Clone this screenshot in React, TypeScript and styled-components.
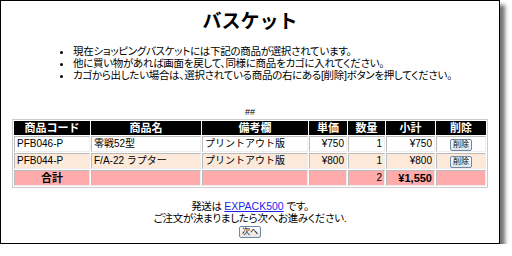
import * as React from 'react';
import styled, { createGlobalStyle } from 'styled-components';

interface Item {
  code: string;
  name: string;
  note: string;
  price: string;
  qty: number;
  subtotal: string;
}

const items: Item[] = [
  { code: 'PFB046-P', name: '零戦52型', note: 'プリントアウト版', price: '¥750', qty: 1, subtotal: '¥750' },
  { code: 'PFB044-P', name: 'F/A-22 ラプター', note: 'プリントアウト版', price: '¥800', qty: 1, subtotal: '¥800' },
];

const GlobalStyle = createGlobalStyle`
  html, body {
    margin: 0;
    padding: 0;
    background: #fff;
  }
  body {
    font-family: "Liberation Sans", "Noto Sans CJK JP", sans-serif;
    color: #000;
  }
`;

const App = () => {
  return (
    <>
      <GlobalStyle />
      <Window>
        <Title>バスケット</Title>
        <Notes>
          <li>現在ショッピングバスケットには下記の商品が選択されています。</li>
          <li>他に買い物があれば画面を戻して、同様に商品をカゴに入れてください。</li>
          <li>カゴから出したい場合は、選択されている商品の右にある[削除]ボタンを押してください。</li>
        </Notes>
        <Marker>##</Marker>
        <Basket>
          <thead>
            <tr>
              <HeadCell style={{ width: 74 }}>商品コード</HeadCell>
              <HeadCell style={{ width: 108 }}>商品名</HeadCell>
              <HeadCell style={{ width: 104 }}>備考欄</HeadCell>
              <HeadCell style={{ width: 36 }}>単価</HeadCell>
              <HeadCell style={{ width: 35 }}>数量</HeadCell>
              <HeadCell style={{ width: 47 }}>小計</HeadCell>
              <HeadCell>削除</HeadCell>
            </tr>
          </thead>
          <tbody>
            {items.map((item, index) => (
              <Row key={item.code} $odd={index % 2 === 1}>
                <Cell>{item.code}</Cell>
                <Cell>{item.name}</Cell>
                <Cell>{item.note}</Cell>
                <Cell $align="right">{item.price}</Cell>
                <Cell $align="right">{item.qty}</Cell>
                <Cell $align="right">{item.subtotal}</Cell>
                <Cell $align="center">
                  <SmallButton type="button">削除</SmallButton>
                </Cell>
              </Row>
            ))}
            <TotalRow>
              <Cell $align="center" $bold>合計</Cell>
              <Cell />
              <Cell />
              <Cell />
              <Cell $align="right">2</Cell>
              <Cell $align="right" $bold>¥1,550</Cell>
              <Cell />
            </TotalRow>
          </tbody>
        </Basket>
        <Footer>
          <div>
            発送は <ShipLink href="#">EXPACK500</ShipLink> です。
          </div>
          <div>ご注文が決まりましたら次へお進みください.</div>
          <SmallButton type="button">次へ</SmallButton>
        </Footer>
      </Window>
    </>
  );
};

const Window = styled.div`
  box-sizing: border-box;
  width: 500px;
  height: 244px;
  border: 1px solid #000;
  background: #fff;
  box-shadow: 5px 5px 4px rgba(0, 0, 0, 0.55);
  display: flex;
  flex-direction: column;
  align-items: center;
  padding-top: 6px;
`;

const Title = styled.h1`
  margin: 0;
  font-family: "Noto Sans CJK JP", sans-serif;
  font-size: 19px;
  font-weight: bold;
  line-height: 26px;
`;

const Notes = styled.ul`
  align-self: stretch;
  margin: 12px 0 0 0;
  padding-left: 72px;
  font-family: "Liberation Sans", "Noto Sans CJK JP", sans-serif;
  font-size: 10.5px;
  line-height: 12px;
  font-feature-settings: "palt";
  letter-spacing: -0.3px;
  li {
    list-style: disc;
  }
`;

const Marker = styled.div`
  margin-top: 27px;
  font-size: 9px;
  line-height: 9px;
`;

const Basket = styled.table`
  margin-top: 2px;
  width: 476px;
  border: 1px solid #ccc;
  border-collapse: separate;
  border-spacing: 1px;
  font-family: "Liberation Sans", "Noto Sans CJK JP", sans-serif;
  font-size: 10px;
`;

const HeadCell = styled.th`
  background: #000;
  color: #fff;
  font-family: "Liberation Sans", "Noto Sans CJK JP", sans-serif;
  font-weight: bold;
  font-size: 11px;
  line-height: 12px;
  height: 12px;
  padding: 0;
  border: 1px solid #000;
`;

const Row = styled.tr<{ $odd: boolean }>`
  background: ${(p) => (p.$odd ? '#fde9d9' : '#fff')};
`;

const TotalRow = styled.tr`
  background: #ffabab;
`;

const Cell = styled.td<{ $align?: string; $bold?: boolean }>`
  text-align: ${(p) => p.$align || 'left'};
  font-weight: ${(p) => (p.$bold ? 'bold' : 'normal')};
  font-size: ${(p) => (p.$bold ? '11px' : '10px')};
  height: 14px;
  padding: 0 2px;
  line-height: 12px;
  border: 1px solid #ddd;
  border-color: #bbb #eee #eee #bbb;
  white-space: nowrap;
`;

const SmallButton = styled.button`
  font-family: "Liberation Sans", "Noto Sans CJK JP", sans-serif;
  font-size: 8px;
  line-height: 8px;
  padding: 1px 2px;
  border: 1px solid #6f8aa6;
  border-radius: 2px;
  background: linear-gradient(#fff, #e4e4e4);
  color: #000;
`;

const Footer = styled.div`
  margin-top: 13px;
  display: flex;
  flex-direction: column;
  align-items: center;
  gap: 0;
  font-family: "Liberation Sans", "Noto Sans CJK JP", sans-serif;
  font-size: 10.5px;
  line-height: 11.5px;
  font-feature-settings: "palt";
  letter-spacing: -0.3px;
  button {
    margin-top: 2px;
  }
`;

const ShipLink = styled.a`
  color: #2222ee;
  font-family: "Liberation Sans", sans-serif;
  letter-spacing: 0;
  text-decoration: underline;
`;

export default App;
